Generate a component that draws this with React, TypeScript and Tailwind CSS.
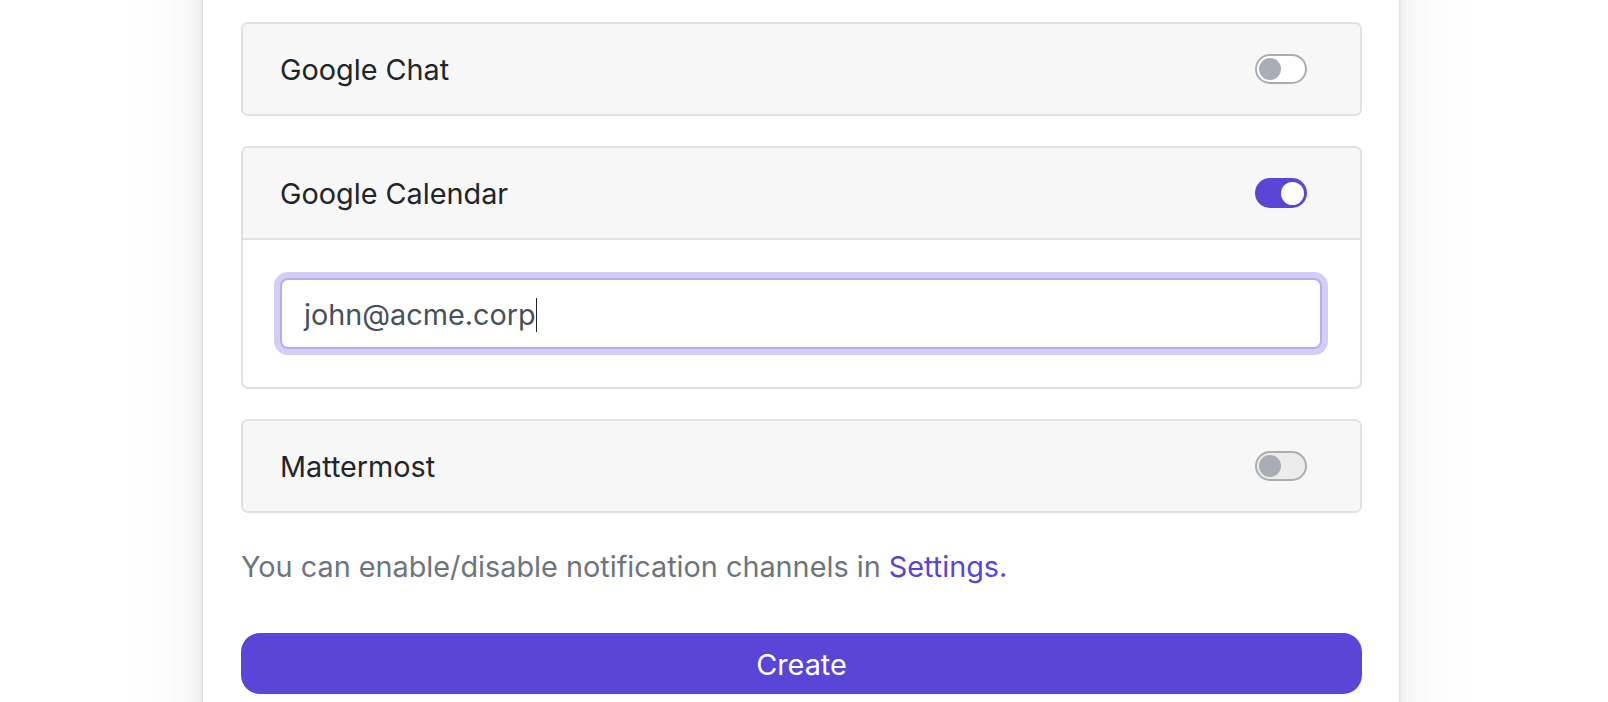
const font = "font-['Inter',sans-serif]";

function Toggle({ on, tint }: { on?: boolean; tint?: boolean }) {
  if (on) {
    return (
      <div className="flex h-[30px] w-[52px] items-center justify-end rounded-full bg-[#5945d6] px-[3px]">
        <div className="h-[23px] w-[23px] rounded-full bg-white" />
      </div>
    );
  }
  return (
    <div className={`flex h-[30px] w-[52px] items-center rounded-full border-2 border-[#a9aeb5] px-[2px] ${tint ? "bg-[#ececed]" : "bg-white"}`}>
      <div className="h-[22px] w-[22px] rounded-full bg-[#a9aeb5]" />
    </div>
  );
}

function Channel({ name, on, tint, children }: { name: string; on?: boolean; tint?: boolean; children?: React.ReactNode }) {
  return (
    <div className="overflow-hidden rounded-[7px] border-2 border-[#e1e1e2]">
      <div className={`flex h-[90px] items-center justify-between bg-[#f7f7f7] pl-[37px] pr-[53px] ${children ? "h-[92px] border-b-2 border-[#e1e1e2]" : ""}`}>
        <span className="pt-[2px] text-[28.8px] leading-none text-[#212529]">{name}</span>
        <Toggle on={on} tint={tint} />
      </div>
      {children}
    </div>
  );
}

export default function App() {
  return (
    <div className={`h-[702px] overflow-hidden bg-white ${font}`}>
      <div className="-my-[200px] ml-[203px] flex w-[1196px] flex-col gap-[30px] bg-white pl-[38px] pr-[37px] pt-[222px] pb-[208px] shadow-[0_0_2px_rgba(0,0,0,0.16),0_0_12px_rgba(0,0,0,0.06),0_0_50px_rgba(0,0,0,0.06),0_0_110px_rgba(0,0,0,0.04)]">
        <Channel name="Google Chat" />
        <Channel name="Google Calendar" on>
          <div className="pl-[37px] pr-[38px] pt-[38px] pb-[38px]">
            <div className="flex h-[71px] items-center rounded-[8px] border-2 border-[#b6adf0] bg-white pl-[22px] pt-[3px] text-[28.8px] text-[#495057] shadow-[0_0_0_6px_#d3cef6]">
              <span>john@acme.corp</span>
              <span className="h-[34px] w-px bg-[#212529]" />
            </div>
          </div>
        </Channel>
        <Channel name="Mattermost" tint />
        <p className="mt-[4px] text-[28.8px] leading-[40px] text-[#6c757d]">
          You can enable/disable notification channels in <span className="text-[#5945d6]">Settings.</span>
        </p>
        <button className="mt-[16px] h-[61px] rounded-[19px] bg-[#5945d6] pt-[2px] text-[28.8px] text-white">Create</button>
      </div>
    </div>
  );
}
